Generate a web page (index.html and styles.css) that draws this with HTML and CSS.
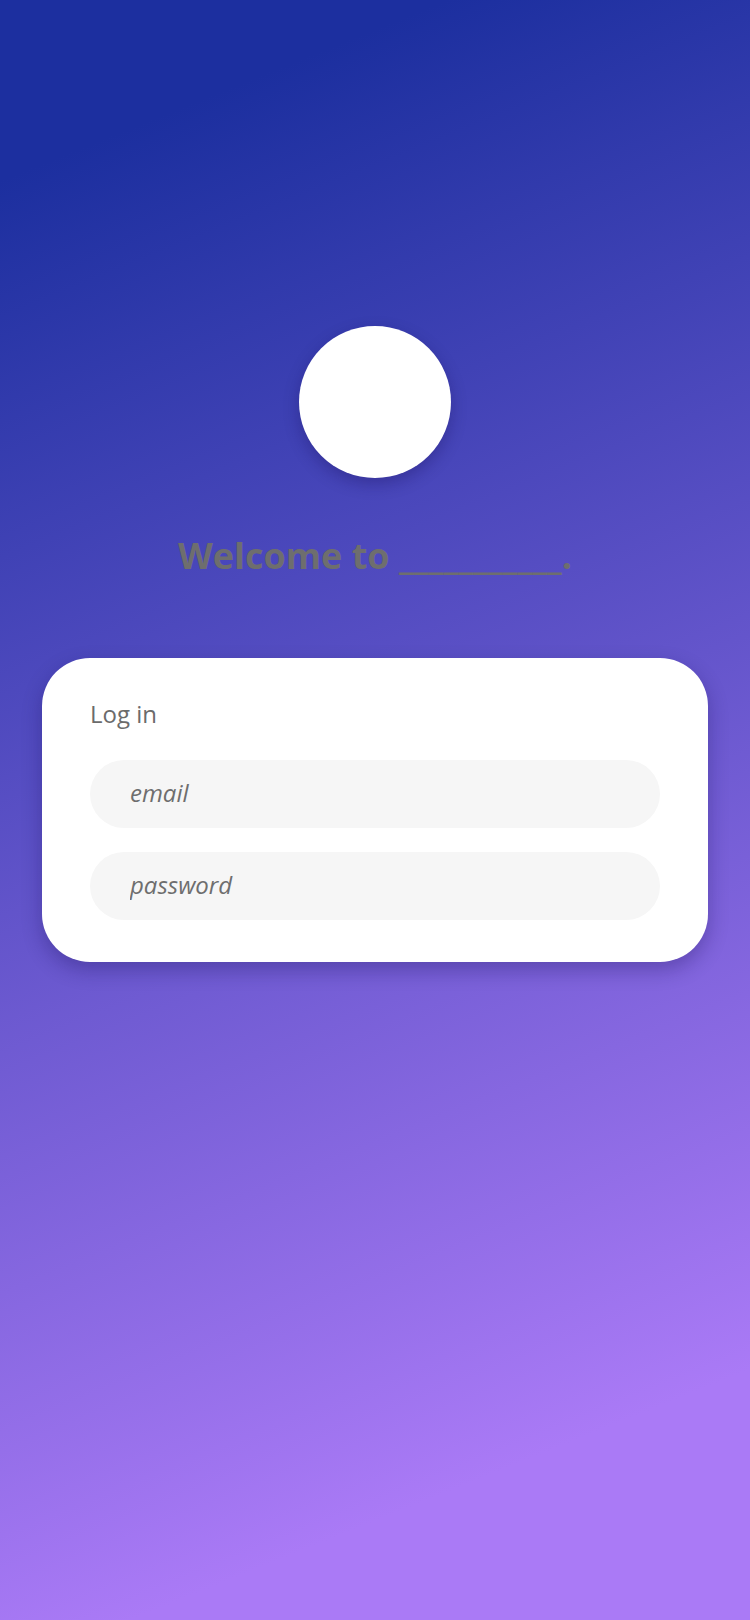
FILE: index.html
```html
<!DOCTYPE html>
<html lang="en">
<head>
<meta charset="utf-8">
<title>Welcome</title>
<link rel="stylesheet" href="styles.css">
</head>
<body>
<main class="page">
  <div class="logo"></div>
  <h1 class="title">Welcome to ___________.</h1>
  <section class="card">
    <h2 class="card-title">Log in</h2>
    <form class="form">
      <input class="field" type="email" placeholder="email">
      <input class="field" type="password" placeholder="password">
    </form>
  </section>
</main>
</body>
</html>
```

FILE: styles.css
```css
html, body {
  margin: 0;
  padding: 0;
}
body {
  width: 750px;
  min-height: 1620px;
  font-family: "Open Sans", "Noto Sans", sans-serif;
  background: linear-gradient(158deg, #1c2f9f 9.4%, #aa7af6 87%);
}
.page {
  display: flex;
  flex-direction: column;
  align-items: center;
  padding-top: 326px;
}
.logo {
  width: 152px;
  height: 152px;
  border-radius: 50%;
  background: #fff;
  box-shadow: 0 6px 16px rgba(20, 10, 80, 0.3);
}
.title {
  margin: 53px 0 0;
  font-size: 36px;
  font-weight: 700;
  line-height: normal;
  color: #6e6e6e;
}
.card {
  box-sizing: border-box;
  width: 666px;
  margin-top: 78px;
  padding: 39px 48px 42px;
  background: #fff;
  border-radius: 48px;
  box-shadow: 0 8px 20px rgba(20, 10, 80, 0.3);
}
.card-title {
  margin: 0;
  font-size: 24px;
  font-weight: 400;
  line-height: normal;
  color: #6b6b6b;
}
.form {
  display: flex;
  flex-direction: column;
  gap: 24px;
  margin-top: 30px;
}
.field {
  box-sizing: border-box;
  width: 100%;
  height: 68px;
  border: none;
  outline: none;
  border-radius: 34px;
  background: #f6f6f6;
  padding: 0 40px 4px;
  font-family: "Open Sans", "Noto Sans", sans-serif;
  font-size: 24px;
  font-style: italic;
  color: #6b6b6b;
}
.field::placeholder {
  color: #6e6e6e;
  opacity: 1;
}
```
